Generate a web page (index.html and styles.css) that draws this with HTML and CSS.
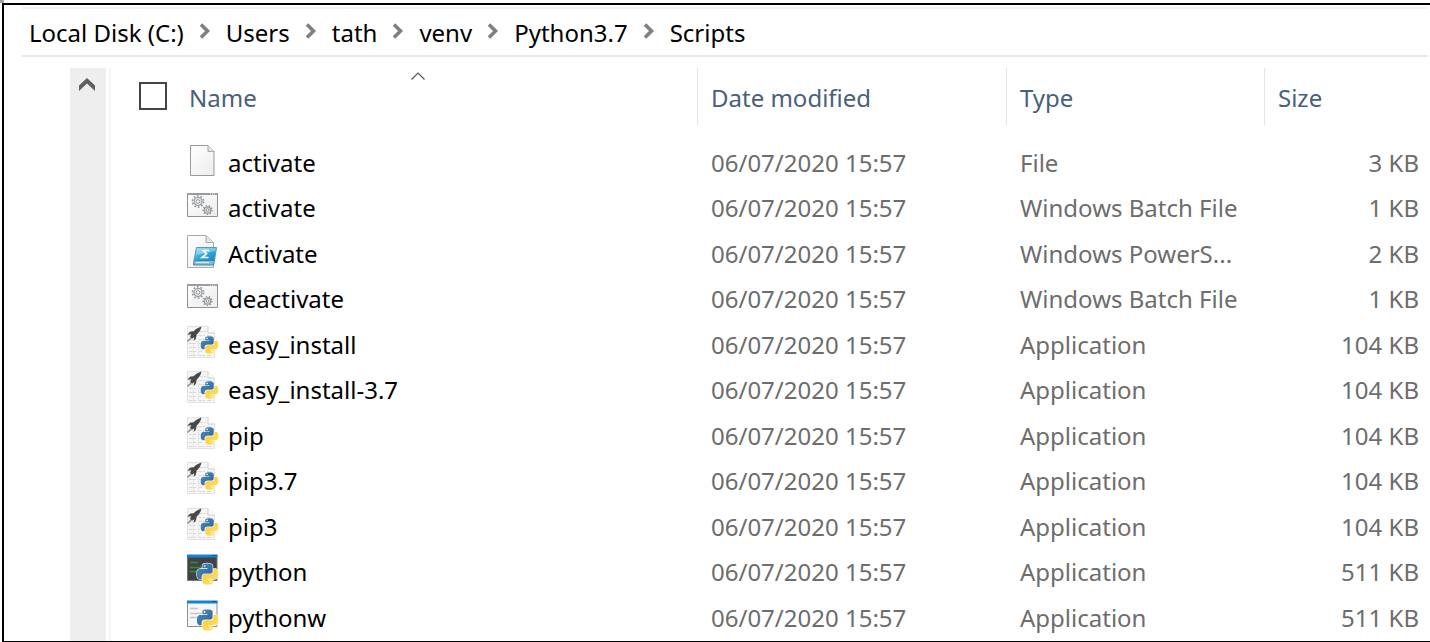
FILE: index.html
```html
<!DOCTYPE html>
<html lang="en">
<head>
<meta charset="utf-8">
<title>Scripts</title>
<link rel="stylesheet" href="styles.css">
</head>
<body>
<svg class="sprite" aria-hidden="true">
  <defs>
    <linearGradient id="paper" x1="0" y1="0" x2="1" y2="1"><stop offset="0" stop-color="#fff"/><stop offset="1" stop-color="#ececec"/></linearGradient>
    <linearGradient id="cyan" x1="0" y1="0" x2="1" y2="1"><stop offset="0" stop-color="#8fd6ee"/><stop offset=".5" stop-color="#35a7d6"/><stop offset="1" stop-color="#1a84bd"/></linearGradient>
    <linearGradient id="pyblue" x1="0" y1="0" x2="1" y2="1"><stop offset="0" stop-color="#4a8fc4"/><stop offset="1" stop-color="#2d618e"/></linearGradient>
    <linearGradient id="pyyellow" x1="0" y1="0" x2="1" y2="1"><stop offset="0" stop-color="#ffc836"/><stop offset="1" stop-color="#ffe46a"/></linearGradient>
  </defs>
  <symbol id="python-mark" viewBox="-1 -1 26 26">
    <g stroke="#fff" stroke-width="1.2" paint-order="stroke">
    <path fill="url(#pyblue)" d="M14.25.18l.9.2.73.26.59.3.45.32.34.34.25.34.16.33.1.3.04.26.02.2-.01.13V8.5l-.05.63-.13.55-.21.46-.26.38-.3.31-.33.25-.35.19-.35.14-.33.1-.3.07-.26.04-.21.02H8.77l-.69.05-.59.14-.5.22-.41.27-.33.32-.27.35-.2.36-.15.37-.1.35-.07.32-.04.27-.02.21v3.06H3.17l-.21-.03-.28-.07-.32-.12-.35-.18-.36-.26-.36-.36-.35-.46-.32-.59-.28-.73-.21-.88-.14-1.05-.05-1.23.06-1.22.16-1.04.24-.87.32-.71.36-.57.4-.44.42-.33.42-.24.4-.16.36-.1.32-.05.24-.01h.16l.06.01h8.16v-.83H6.18l-.01-2.75-.02-.37.05-.34.11-.31.17-.28.25-.26.31-.23.38-.2.44-.18.51-.15.58-.12.64-.1.71-.06.77-.04.84-.02 1.27.05zm-6.3 1.98l-.23.33-.08.41.08.41.23.34.33.22.41.09.41-.09.33-.22.23-.34.08-.41-.08-.41-.23-.33-.33-.22-.41-.09-.41.09z"/>
    <path fill="url(#pyyellow)" d="M21.1 6.11l.28.06.32.12.35.18.36.27.36.35.35.47.32.59.28.73.21.88.14 1.04.05 1.23-.06 1.23-.16 1.04-.24.86-.32.71-.36.57-.4.45-.42.33-.42.24-.4.16-.36.09-.32.05-.24.02-.16-.01h-8.22v.82h5.84l.01 2.76.02.36-.05.34-.11.31-.17.29-.25.25-.31.24-.38.2-.44.17-.51.15-.58.13-.64.09-.71.07-.77.04-.84.01-1.27-.04-1.07-.14-.9-.2-.73-.25-.59-.3-.45-.33-.34-.34-.25-.34-.16-.33-.1-.3-.04-.25-.02-.2.01-.13v-5.34l.05-.64.13-.54.21-.46.26-.38.3-.32.33-.24.35-.2.35-.14.33-.1.3-.06.26-.04.21-.02.13-.01h5.84l.69-.05.59-.14.5-.21.41-.28.33-.32.27-.35.2-.36.15-.36.1-.35.07-.32.04-.28.02-.21V6.07h2.09l.14.01zM14.6 20.2l-.23.33-.08.41.08.41.23.33.33.23.41.08.41-.08.33-.23.23-.33.08-.41-.08-.41-.23-.33-.33-.23-.41-.08-.41.08z"/>
    </g>
  </symbol>
  <symbol id="icon-file" viewBox="0 0 32 34">
    <path d="M3.500 1.500H21L27 7.500V31.500H3.500Z" fill="url(#paper)" stroke="#9a9a9a"/>
    <path d="M21 1.500V7.500H27" fill="#e2e2e2" stroke="#a8a8a8"/>
  </symbol>
  <symbol id="icon-batch" viewBox="0 0 32 34">
    <path d="M.5 4.500H30.500V27.500H.5Z" fill="url(#paper)" stroke="#8d9296"/>
    <path d="M0 5H31" stroke="#979da2" stroke-width="2"/>
    <path d="M23 5H29" stroke="#eee" stroke-dasharray="1 1"/>
    <g fill="none" stroke="#92989d">
      <circle cx="11" cy="12.500" r="5.600" stroke-width="1.600" stroke-dasharray="1.760 1.760"/>
      <circle cx="11" cy="12.500" r="4" fill="#e6e8ea" stroke-width="1.200"/>
      <circle cx="11" cy="12.500" r="1.800" fill="#fff"/>
      <circle cx="20.500" cy="21" r="4.400" stroke-width="1.400" stroke-dasharray="1.530 1.530"/>
      <circle cx="20.500" cy="21" r="3.200" fill="#dcdee0" stroke-width="1.200"/>
      <circle cx="20.500" cy="21" r="1.300" fill="#fff"/>
    </g>
  </symbol>
  <symbol id="icon-powershell" viewBox="0 0 32 34">
    <path d="M.5.500H19L26.500 7.500V32.500H.5Z" fill="url(#paper)" stroke="#aaa"/>
    <path d="M19 .5V7.500H26.500" fill="#e2e2e2" stroke="#aaa"/>
    <path d="M9.500 12.500H29.500L27.500 25.500H7Z" fill="url(#cyan)" stroke="#4a9fc2"/>
    <path d="M10 13H29L28.500 16L9 20Z" fill="#d5f2ff" opacity=".4"/>
    <path d="M7 25.500H27.500L26.500 30H6.500Z" fill="#7dbfdf" stroke="#3f86a8"/>
    <path d="M9 27.500H22" stroke="#d8f0fa"/>
    <path d="M22 15.500H16L19.500 18.800L15 22.500H21.500" fill="none" stroke="#fff" stroke-width="1.600"/>
  </symbol>
  <symbol id="icon-launcher" viewBox="0 0 32 34">
    <path d="M.5.500H21L27.500 7V31.500H.5Z" fill="#f6f6f6" stroke="#e2e2e2"/>
    <path d="M21 1V7H27.500" fill="#fff" stroke="#ccc"/>
    <path d="M3 5.500H19M2 9.500H25M2 13.500H22M2 17.500H16M2 21.500H15M2 25.500H15M2 29.500H24" stroke="#d8d8d8" stroke-dasharray="4 1 2 2"/>
    <path d="M6.500 17V30M11.500 12V30" stroke="#e6e6e6"/>
    <path d="M14.500.5C11 1.500 8.500 3.200 6.700 5.300L3 5.800L.3 8.700L4.300 8.300L3 11L5 12.800L7.300 11.300L6.500 15.300L9 12.500L9.700 8.500C12 6.500 13.800 4 14.500.5Z" fill="#484848"/>
    <path d="M.500 15.500L4 12" stroke="#888" stroke-width="1.500"/>
    <use href="#python-mark" x="13" y="9" width="19" height="20"/>
  </symbol>
  <symbol id="icon-python" viewBox="0 0 32 34">
    <path d="M.5 2.500H30V27.500H.5Z" fill="#404244" stroke="#777"/>
    <path d="M0 3H30.500" stroke="#1583d0" stroke-width="3"/>
    <path d="M25 2.500H30" stroke="#075e9f"/>
    <path d="M3 9.500H11M3 14.500H15M3 18.500H10" stroke="#338b3c" stroke-width="1.500"/>
    <use href="#python-mark" x="9" y="9" width="23" height="24"/>
  </symbol>
  <symbol id="icon-pythonw" viewBox="0 0 32 34">
    <path d="M.5 2.500H30V27.500H.5Z" fill="#f6f6f6" stroke="#8e8e8e"/>
    <path d="M0 3H30.500" stroke="#1583d0" stroke-width="3"/>
    <path d="M25 2.500H30" stroke="#075e9f"/>
    <path d="M3 9.500H11M3 14.500H15M3 18.500H10" stroke="#c6c6c6" stroke-width="1.500"/>
    <use href="#python-mark" x="9" y="9" width="23" height="24"/>
  </symbol>
  <symbol id="crumb-arrow" viewBox="0 0 12 16"><path d="M2 1.500L8.500 8L2 14.500" fill="none" stroke="#808080" stroke-width="3.600"/></symbol>
</svg>

<main class="window">
  <nav class="crumbs" aria-label="Path">
    <a href="#">Local Disk (C:)</a><svg class="crumb-arrow"><use href="#crumb-arrow"/></svg>
    <a href="#">Users</a><svg class="crumb-arrow"><use href="#crumb-arrow"/></svg>
    <a href="#">tath</a><svg class="crumb-arrow"><use href="#crumb-arrow"/></svg>
    <a href="#">venv</a><svg class="crumb-arrow"><use href="#crumb-arrow"/></svg>
    <a href="#">Python3.7</a><svg class="crumb-arrow"><use href="#crumb-arrow"/></svg>
    <a href="#">Scripts</a>
  </nav>
  <div class="content">
    <div class="scrollbar">
      <button class="scroll-up" type="button" aria-label="Scroll up">
        <svg width="18" height="16" viewBox="0 0 18 16"><path d="M1 8.500L9 1L17 8.500V14L9 6.500L1 14Z" fill="#606060"/></svg>
      </button>
    </div>
    <div class="pane">
      <table class="files">
        <colgroup><col><col class="col-date"><col class="col-type"><col class="col-size"></colgroup>
        <thead>
          <tr>
            <th><div class="head head-name"><input class="select-all" type="checkbox" aria-label="Select all"><button class="sort" type="button">Name</button><svg class="sort-arrow" width="14" height="8" viewBox="0 0 14 8"><path d="M.500 7.500L7 1L13.500 7.500" fill="none" stroke="#555" stroke-width="1.200"/></svg></div></th>
            <th><div class="head head-rule"><button class="sort" type="button">Date modified</button></div></th>
            <th><div class="head head-rule"><button class="sort" type="button">Type</button></div></th>
            <th><div class="head head-rule"><button class="sort" type="button">Size</button></div></th>
          </tr>
        </thead>
        <tbody>
          <tr><td><div class="name"><svg class="icon"><use href="#icon-file"/></svg>activate</div></td><td>06/07/2020 15:57</td><td>File</td><td class="size">3 KB</td></tr>
          <tr><td><div class="name"><svg class="icon"><use href="#icon-batch"/></svg>activate</div></td><td>06/07/2020 15:57</td><td>Windows Batch File</td><td class="size">1 KB</td></tr>
          <tr><td><div class="name"><svg class="icon"><use href="#icon-powershell"/></svg>Activate</div></td><td>06/07/2020 15:57</td><td>Windows PowerS...</td><td class="size">2 KB</td></tr>
          <tr><td><div class="name"><svg class="icon"><use href="#icon-batch"/></svg>deactivate</div></td><td>06/07/2020 15:57</td><td>Windows Batch File</td><td class="size">1 KB</td></tr>
          <tr><td><div class="name"><svg class="icon"><use href="#icon-launcher"/></svg>easy_install</div></td><td>06/07/2020 15:57</td><td>Application</td><td class="size">104 KB</td></tr>
          <tr><td><div class="name"><svg class="icon"><use href="#icon-launcher"/></svg>easy_install-3.7</div></td><td>06/07/2020 15:57</td><td>Application</td><td class="size">104 KB</td></tr>
          <tr><td><div class="name"><svg class="icon"><use href="#icon-launcher"/></svg>pip</div></td><td>06/07/2020 15:57</td><td>Application</td><td class="size">104 KB</td></tr>
          <tr><td><div class="name"><svg class="icon"><use href="#icon-launcher"/></svg>pip3.7</div></td><td>06/07/2020 15:57</td><td>Application</td><td class="size">104 KB</td></tr>
          <tr><td><div class="name"><svg class="icon"><use href="#icon-launcher"/></svg>pip3</div></td><td>06/07/2020 15:57</td><td>Application</td><td class="size">104 KB</td></tr>
          <tr><td><div class="name"><svg class="icon"><use href="#icon-python"/></svg>python</div></td><td>06/07/2020 15:57</td><td>Application</td><td class="size">511 KB</td></tr>
          <tr><td><div class="name"><svg class="icon"><use href="#icon-pythonw"/></svg>pythonw</div></td><td>06/07/2020 15:57</td><td>Application</td><td class="size">511 KB</td></tr>
        </tbody>
      </table>
    </div>
  </div>
</main>
</body>
</html>
```
FILE: styles.css
```css
* { box-sizing: border-box; }

body {
  margin: 0;
  padding: 3px 0 0 2px;
  background: linear-gradient(#a0a49c, #a0a49c) 0 0 / 4px 3px no-repeat #fff;
  font-family: "Noto Sans", "Open Sans", sans-serif;
  font-size: 24px;
  color: #6d6d6d;
}

.sprite { position: absolute; width: 0; height: 0; }

button {
  padding: 0;
  border: 0;
  background: none;
  font: inherit;
  color: inherit;
}

.window {
  border: solid #000;
  border-width: 2px 0 1px 2px;
  background: #fff;
}

.crumbs {
  display: flex;
  align-items: center;
  gap: 15px;
  height: 50px;
  margin: 2px 2px 0 18px;
  padding-left: 7px;
  border-top: 2px solid #f2f2f2;
  border-bottom: 2px solid #e9e9e9;
}

.crumbs a { color: #000; text-decoration: none; white-space: nowrap; }
.crumb-arrow { flex: none; width: 12px; height: 16px; margin-bottom: 2px; }

.content { display: flex; padding: 11px 0 0 66px; }

.scrollbar { flex: none; width: 36px; background: #eee; }
.scroll-up { display: flex; justify-content: center; width: 34px; padding-top: 9px; }

.pane {
  flex: 1;
  margin-left: 3px;
  padding-left: 28px;
  border-left: 2px solid #f5f5f5;
}

.files {
  width: 100%;
  table-layout: fixed;
  border-collapse: collapse;
}

.col-date { width: 309px; }
.col-type { width: 258px; }
.col-size { width: 166px; }

th { padding: 0 0 16px; font-weight: 400; color: #4a607a; }

.head {
  position: relative;
  display: flex;
  align-items: center;
  height: 57px;
  padding-left: 13px;
}

.head-rule { border-left: 1px solid #e5e5e5; }
.head-name { gap: 22px; padding-left: 0; }
.sort { padding-top: 2px; }

.sort-arrow { position: absolute; top: 4px; left: 50%; margin-left: -7px; }

.select-all {
  appearance: none;
  width: 28px;
  height: 28px;
  margin: 0 0 2px;
  border: 2px solid #444;
  background: #fff;
}

td {
  height: 45px;
  padding: 0 0 0 14px;
  line-height: 43px;
  vertical-align: top;
  white-space: nowrap;
}

td:first-child { padding-left: 48px; }
tr:nth-child(even) td { height: 46px; }

.name { display: flex; gap: 9px; color: #000; }
.icon { flex: none; width: 32px; height: 34px; margin-top: 3px; }

td.size { padding: 0 11px 0 0; text-align: right; }
```
